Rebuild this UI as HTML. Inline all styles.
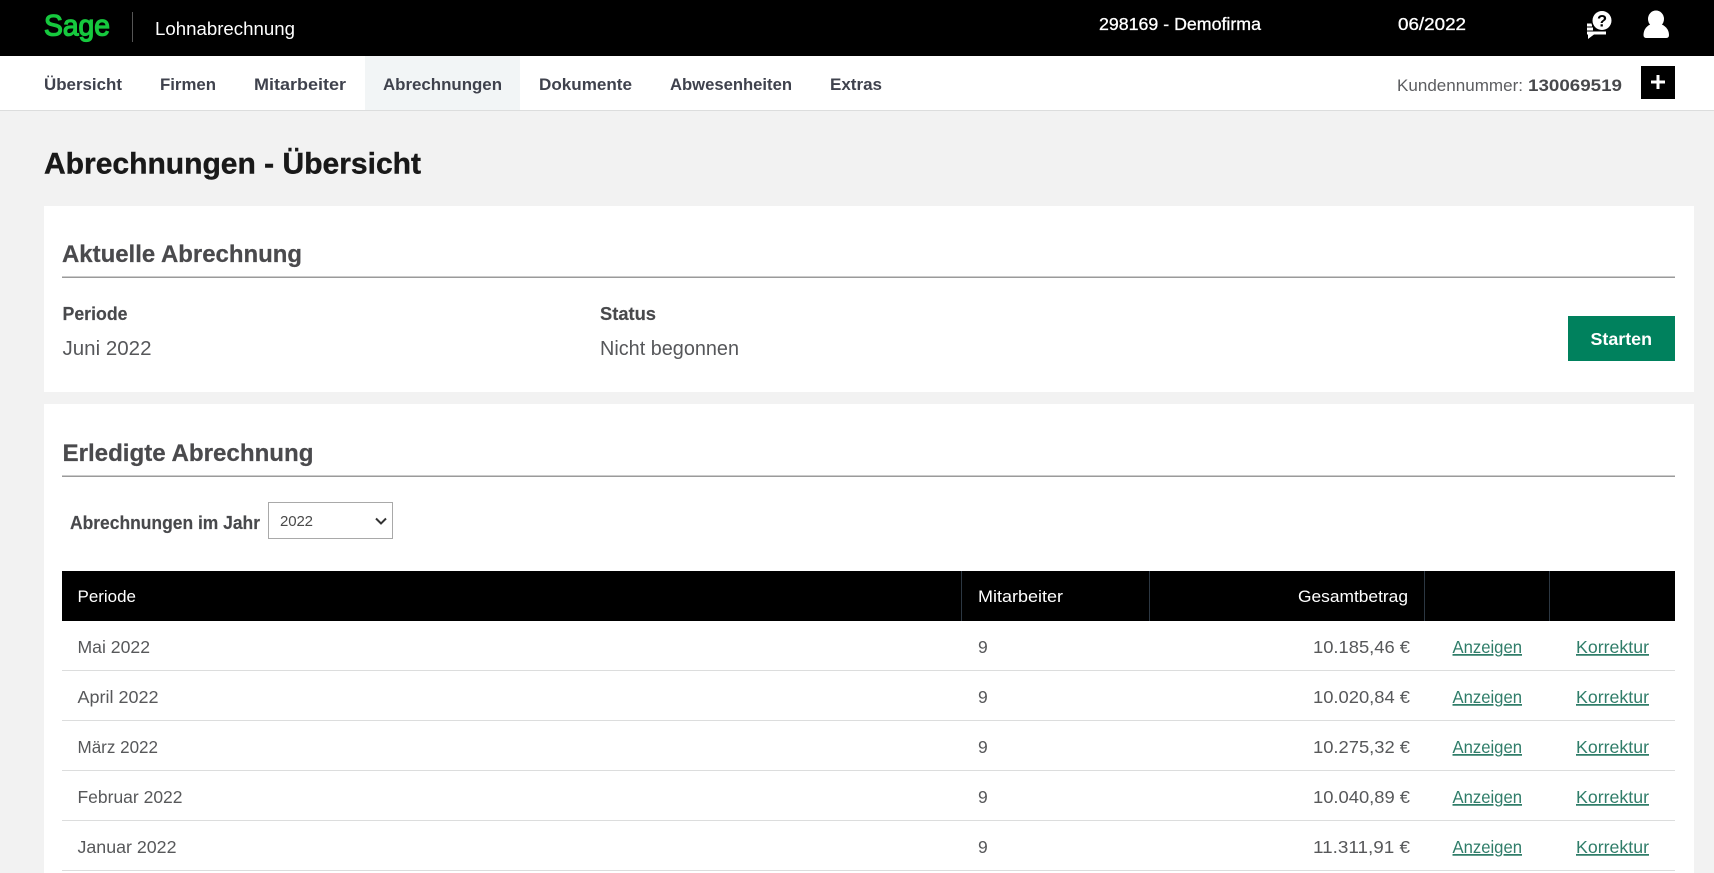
<!DOCTYPE html>
<html lang="de">
<head>
<meta charset="utf-8">
<title>Abrechnungen - Übersicht</title>
<style>
html,body{margin:0;padding:0;background:#f2f2f2;width:1714px;height:873px;overflow:hidden}
svg{display:block;position:absolute;left:0;top:0}
text{font-family:"Liberation Sans",Arial,sans-serif;white-space:pre}
.nav{font-size:17px;font-weight:700;fill:#3f424d}
.h2{font-size:24.500px;font-weight:700;fill:#4a4a4d;stroke:#4a4a4d;stroke-width:.25}
.lab{font-size:18px;font-weight:700;fill:#48494c;stroke:#48494c;stroke-width:.15}
.val{font-size:20px;fill:#56575a}
.th{font-size:17px;fill:#fff}
.td{font-size:17.500px;fill:#57585a}
.a{font-size:17.500px;fill:#2f7d69;text-decoration:underline}
.top{font-size:17.500px;fill:#fff;stroke:#fff;stroke-width:.3}
</style>
</head>
<body>
<svg width="1714" height="873" viewBox="0 0 1714 873" xmlns="http://www.w3.org/2000/svg">
<!-- top bar -->
<rect x="0" y="0" width="1714" height="56" fill="#000"/>
<text x="44" y="35.500" font-size="30" fill="#16c93e" stroke="#16c93e" stroke-width="1.300" textLength="66" lengthAdjust="spacingAndGlyphs">Sage</text>
<rect x="132" y="12" width="1" height="30" fill="#555"/>
<text x="155" y="35" font-size="18.500" fill="#fff" textLength="140" lengthAdjust="spacingAndGlyphs">Lohnabrechnung</text>
<text class="top" x="1099" y="30" textLength="162" lengthAdjust="spacingAndGlyphs">298169 - Demofirma</text>
<text class="top" x="1398" y="30" textLength="68" lengthAdjust="spacingAndGlyphs">06/2022</text>
<!-- help icon -->
<rect x="1587" y="23.500" width="5" height="3" fill="#fff"/>
<rect x="1587" y="27.500" width="6" height="3" fill="#fff"/>
<path d="M1587 31.500h19v3h-12l-6 4.500v-4.500h-1z" fill="#fff"/>
<circle cx="1602" cy="20.500" r="11" fill="#000"/>
<circle cx="1602" cy="20.500" r="9.500" fill="#fff"/>
<text x="1602" y="26.500" font-size="16.500" font-weight="700" fill="#000" text-anchor="middle">?</text>
<!-- user icon -->
<ellipse cx="1656" cy="19" rx="8" ry="8.500" fill="#fff"/>
<path d="M1643.500 35c0-6 4-10 8.500-11h8c4.500 1 9 5 9 11q0 3-3 3h-19.500q-3 0-3-3z" fill="#fff"/>

<!-- nav -->
<rect x="0" y="56" width="1714" height="54" fill="#fff"/>
<rect x="0" y="110" width="1714" height="1" fill="#dcdddd"/>
<rect x="365" y="56" width="155" height="54" fill="#f2f5f6"/>
<text class="nav" x="44" y="90" textLength="78" lengthAdjust="spacingAndGlyphs">Übersicht</text>
<text class="nav" x="160" y="90" textLength="56" lengthAdjust="spacingAndGlyphs">Firmen</text>
<text class="nav" x="254" y="90" textLength="92" lengthAdjust="spacingAndGlyphs">Mitarbeiter</text>
<text class="nav" x="383" y="90" textLength="119" lengthAdjust="spacingAndGlyphs">Abrechnungen</text>
<text class="nav" x="539" y="90" textLength="93" lengthAdjust="spacingAndGlyphs">Dokumente</text>
<text class="nav" x="670" y="90" textLength="122" lengthAdjust="spacingAndGlyphs">Abwesenheiten</text>
<text class="nav" x="830" y="90" textLength="52" lengthAdjust="spacingAndGlyphs">Extras</text>
<text x="1397" y="91" font-size="17" fill="#5c5d60" textLength="126" lengthAdjust="spacingAndGlyphs">Kundennummer:</text>
<text x="1528" y="91" font-size="17" font-weight="700" fill="#48494c" textLength="94" lengthAdjust="spacingAndGlyphs">130069519</text>
<rect x="1641" y="66" width="34" height="33" fill="#000"/>
<path d="M1658 75v14M1651 82h14" stroke="#fff" stroke-width="3"/>

<!-- title -->
<text x="44" y="173.500" font-size="30" font-weight="700" fill="#191919" stroke="#191919" stroke-width=".4" textLength="377" lengthAdjust="spacingAndGlyphs">Abrechnungen - Übersicht</text>

<!-- card 1 -->
<rect x="44" y="206" width="1650" height="186" fill="#fff"/>
<text class="h2" x="62" y="262" textLength="240" lengthAdjust="spacingAndGlyphs">Aktuelle Abrechnung</text>
<rect x="62" y="276.500" width="1613" height="1.500" fill="#9a9a9a"/>
<text class="lab" x="62.500" y="320" textLength="65" lengthAdjust="spacingAndGlyphs">Periode</text>
<text class="val" x="62.500" y="355" textLength="89" lengthAdjust="spacingAndGlyphs">Juni 2022</text>
<text class="lab" x="600" y="320" textLength="56" lengthAdjust="spacingAndGlyphs">Status</text>
<text class="val" x="600" y="355" textLength="139" lengthAdjust="spacingAndGlyphs">Nicht begonnen</text>
<rect x="1568" y="316" width="107" height="45" fill="#00815d"/>
<text x="1590.500" y="345" font-size="17.500" font-weight="700" fill="#fff" textLength="61.500" lengthAdjust="spacingAndGlyphs">Starten</text>

<!-- card 2 -->
<rect x="44" y="404" width="1650" height="469" fill="#fff"/>
<text class="h2" x="62.500" y="461" textLength="251" lengthAdjust="spacingAndGlyphs">Erledigte Abrechnung</text>
<rect x="62" y="475.500" width="1613" height="1.500" fill="#9a9a9a"/>
<text class="lab" x="70" y="529" textLength="190" lengthAdjust="spacingAndGlyphs">Abrechnungen im Jahr</text>
<rect x="268.500" y="502.500" width="124" height="36" fill="#fff" stroke="#a9a9a9"/>
<text x="280" y="526" font-size="15" fill="#4a4a4a" textLength="33">2022</text>
<path d="M376 518.500l5 5 5-5" fill="none" stroke="#333" stroke-width="2"/>

<!-- table head -->
<rect x="62" y="571" width="1613" height="50" fill="#000"/>
<rect x="961" y="571" width="1" height="50" fill="#2c3742"/>
<rect x="1149" y="571" width="1" height="50" fill="#2c3742"/>
<rect x="1424" y="571" width="1" height="50" fill="#2c3742"/>
<rect x="1549" y="571" width="1" height="50" fill="#2c3742"/>
<text class="th" x="77.500" y="602" textLength="58.500" lengthAdjust="spacingAndGlyphs">Periode</text>
<text class="th" x="978" y="602" textLength="85" lengthAdjust="spacingAndGlyphs">Mitarbeiter</text>
<text class="th" x="1298" y="602" textLength="110" lengthAdjust="spacingAndGlyphs">Gesamtbetrag</text>

<!-- row lines -->
<rect x="62" y="670" width="1613" height="1" fill="#dcdddd"/>
<rect x="62" y="720" width="1613" height="1" fill="#dcdddd"/>
<rect x="62" y="770" width="1613" height="1" fill="#dcdddd"/>
<rect x="62" y="820" width="1613" height="1" fill="#dcdddd"/>
<rect x="62" y="870" width="1613" height="1" fill="#dcdddd"/>

<!-- rows -->
<text class="td" x="77.500" y="653" textLength="72.500" lengthAdjust="spacingAndGlyphs">Mai 2022</text>
<text class="td" x="978" y="653">9</text>
<text class="td" x="1313" y="653" textLength="97" lengthAdjust="spacingAndGlyphs">10.185,46 €</text>
<text class="a" x="1452.500" y="653" textLength="69.500" lengthAdjust="spacingAndGlyphs">Anzeigen</text>
<text class="a" x="1576" y="653" textLength="73" lengthAdjust="spacingAndGlyphs">Korrektur</text>

<text class="td" x="77.500" y="703" textLength="81" lengthAdjust="spacingAndGlyphs">April 2022</text>
<text class="td" x="978" y="703">9</text>
<text class="td" x="1313" y="703" textLength="97" lengthAdjust="spacingAndGlyphs">10.020,84 €</text>
<text class="a" x="1452.500" y="703" textLength="69.500" lengthAdjust="spacingAndGlyphs">Anzeigen</text>
<text class="a" x="1576" y="703" textLength="73" lengthAdjust="spacingAndGlyphs">Korrektur</text>

<text class="td" x="77.500" y="753" textLength="80.500" lengthAdjust="spacingAndGlyphs">März 2022</text>
<text class="td" x="978" y="753">9</text>
<text class="td" x="1313" y="753" textLength="97" lengthAdjust="spacingAndGlyphs">10.275,32 €</text>
<text class="a" x="1452.500" y="753" textLength="69.500" lengthAdjust="spacingAndGlyphs">Anzeigen</text>
<text class="a" x="1576" y="753" textLength="73" lengthAdjust="spacingAndGlyphs">Korrektur</text>

<text class="td" x="77.500" y="803" textLength="105" lengthAdjust="spacingAndGlyphs">Februar 2022</text>
<text class="td" x="978" y="803">9</text>
<text class="td" x="1313" y="803" textLength="97" lengthAdjust="spacingAndGlyphs">10.040,89 €</text>
<text class="a" x="1452.500" y="803" textLength="69.500" lengthAdjust="spacingAndGlyphs">Anzeigen</text>
<text class="a" x="1576" y="803" textLength="73" lengthAdjust="spacingAndGlyphs">Korrektur</text>

<text class="td" x="77.500" y="853" textLength="99" lengthAdjust="spacingAndGlyphs">Januar 2022</text>
<text class="td" x="978" y="853">9</text>
<text class="td" x="1313" y="853" textLength="97" lengthAdjust="spacingAndGlyphs">11.311,91 €</text>
<text class="a" x="1452.500" y="853" textLength="69.500" lengthAdjust="spacingAndGlyphs">Anzeigen</text>
<text class="a" x="1576" y="853" textLength="73" lengthAdjust="spacingAndGlyphs">Korrektur</text>
</svg>
</body>
</html>
